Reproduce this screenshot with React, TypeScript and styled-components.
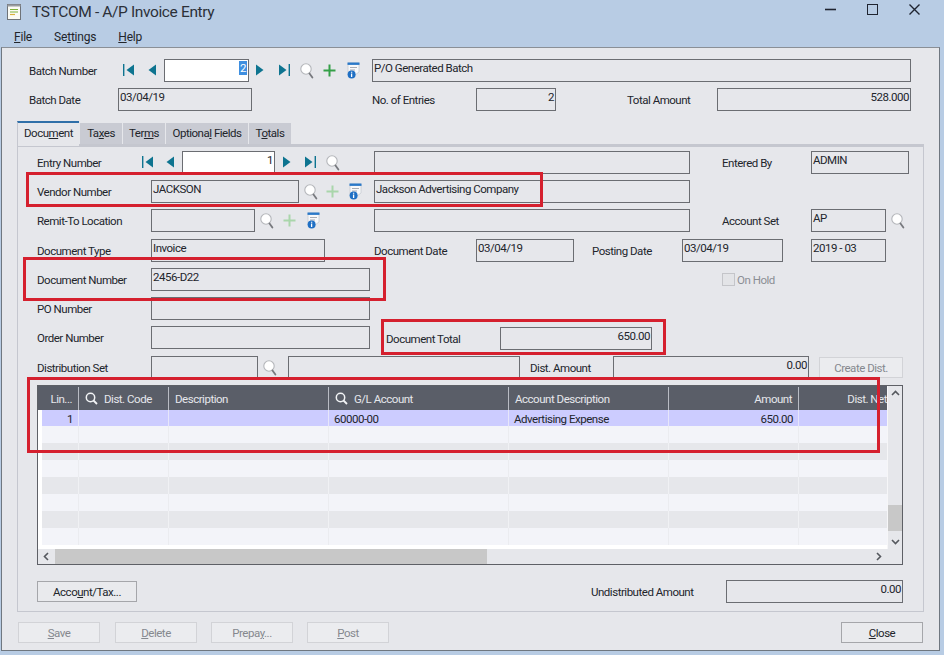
import React from "react";
import styled, { createGlobalStyle } from "styled-components";

const GlobalStyle = createGlobalStyle`
    html, body {
        margin: 0;
        padding: 0;
        background: #b8cce4;
    }
    body {
        font-family: Roboto, "Liberation Sans", sans-serif;
        font-size: 11.5px;
        letter-spacing: -0.48px;
        color: #22252b;
    }
`;

const Window = styled.div`
    position: relative;
    width: 944px;
    height: 655px;
    overflow: hidden;
    background: #b8cce4;
`;

const TitleBar = styled.div`
    display: flex;
    align-items: center;
    height: 24px;
    padding: 0 24px 0 7px;
`;

const Title = styled.div`
    margin-left: 11px;
    flex: 1;
    font-size: 15.5px;
    letter-spacing: -0.37px;
    color: #2c3038;
`;

const WinButtons = styled.div`
    display: flex;
    align-items: center;
    gap: 31px;
    margin-top: -6px;
`;

const MenuBar = styled.div`
    display: flex;
    height: 23px;
    padding: 3px 0 0 14px;
    gap: 22px;
    box-sizing: border-box;
    font-size: 12px;
    letter-spacing: -0.2px;
    line-height: 20px;
    color: #22252b;
`;

const Client = styled.div`
    box-sizing: border-box;
    width: 939px;
    height: 604px;
    margin-left: 1px;
    padding: 11px 16px 0 15px;
    background: #e6e7eb;
    border: 1px solid #6f7780;
    border-top: 1px solid #8a8f96;
`;

const Row = styled.div<{ $mt?: number; $pl?: number }>`
    display: flex;
    align-items: flex-start;
    height: 23px;
    margin-top: ${(p) => p.$mt ?? 6}px;
    padding-left: ${(p) => p.$pl ?? 0}px;
`;

const Label = styled.div<{ $w?: number; $ml?: number; $dy?: number; $muted?: boolean }>`
    flex: none;
    width: ${(p) => (p.$w ? `${p.$w}px` : "auto")};
    margin-left: ${(p) => p.$ml ?? 0}px;
    margin-top: ${(p) => p.$dy ?? 4}px;
    line-height: 17px;
    white-space: nowrap;
    color: ${(p) => (p.$muted ? "#8b8e94" : "#22252b")};
`;

const Field = styled.div<{ $w: number; $ml?: number; $dy?: number; $right?: boolean; $white?: boolean }>`
    flex: none;
    box-sizing: border-box;
    width: ${(p) => p.$w}px;
    height: 23px;
    margin-left: ${(p) => p.$ml ?? 0}px;
    margin-top: ${(p) => p.$dy ?? 0}px;
    padding: 0 1px 0 1px;
    line-height: 17px;
    border: 1px solid #6b6d72;
    background: ${(p) => (p.$white ? "#ffffff" : "#e6e7eb")};
    text-align: ${(p) => (p.$right ? "right" : "left")};
    white-space: nowrap;
    overflow: hidden;
`;

const Selected = styled.span`
    background: #3f8fe0;
    color: #ffffff;
    padding: 0 1px;
`;

const IconSlot = styled.span<{ $w: number; $ml: number; $dy?: number }>`
    flex: none;
    display: block;
    width: ${(p) => p.$w}px;
    margin-left: ${(p) => p.$ml}px;
    margin-top: ${(p) => p.$dy ?? 4}px;
    line-height: 0;
`;

const Tabs = styled.div`
    display: flex;
    align-items: flex-end;
    height: 25px;
    margin-top: 10px;
    gap: 1px;
`;

const Tab = styled.div<{ $w: number; $active?: boolean }>`
    box-sizing: border-box;
    width: ${(p) => p.$w}px;
    height: ${(p) => (p.$active ? 25 : 21)}px;
    margin-bottom: ${(p) => (p.$active ? 0 : 2)}px;
    text-align: center;
    line-height: ${(p) => (p.$active ? 20 : 21)}px;
    background: ${(p) => (p.$active ? "#e6e7eb" : "#c9cbd3")};
    border-top: ${(p) => (p.$active ? "2px solid #2f6fa8" : "none")};
    border-left: ${(p) => (p.$active ? "1px solid #c5c7cf" : "none")};
    position: relative;
    z-index: 1;
`;

const Panel = styled.div`
    box-sizing: border-box;
    width: 907px;
    height: 468px;
    margin-top: -2px;
    padding: 4px 19px 0 19px;
    border: 1px solid #c5c7cf;
    border-top: 3px solid #c5c7cf;
`;

const Grid = styled.div`
    position: relative;
    box-sizing: border-box;
    width: 866px;
    height: 180px;
    margin-top: 6px;
    border: 1px solid #5e6066;
    background: #e6e7eb;
    display: grid;
    grid-template-columns: 849px 15px;
    grid-template-rows: 163px 15px;
`;

const GridBody = styled.div`
    background: #ffffff;
    overflow: hidden;
    padding-bottom: 2px;
`;

const COLS = "41px 90px 160px 180px 160px 130px 88px";

const GridHeader = styled.div`
    display: grid;
    grid-template-columns: ${COLS};
    height: 24px;
    background: #5a5e68;
    color: #e6e7ec;
`;

const HeadCell = styled.div<{ $right?: boolean }>`
    display: flex;
    align-items: center;
    justify-content: ${(p) => (p.$right ? "flex-end" : "flex-start")};
    gap: 6px;
    padding: 0 6px;
    margin-top: 1px;
    border-right: 1px solid #b9bcc4;
    white-space: nowrap;
    overflow: hidden;
    &:last-child {
        border-right: none;
        padding: 0;
    }
`;

const GridRow = styled.div<{ $bg: string; $h: number }>`
    display: grid;
    grid-template-columns: ${COLS};
    height: ${(p) => p.$h}px;
    background: ${(p) => p.$bg};
    box-shadow: inset 4px 0 0 #ffffff;
    line-height: ${(p) => p.$h + 2}px;
`;

const GridCell = styled.div<{ $right?: boolean; $line: string }>`
    box-sizing: border-box;
    padding: 0 5px;
    text-align: ${(p) => (p.$right ? "right" : "left")};
    border-right: 1px solid ${(p) => p.$line};
    white-space: nowrap;
    overflow: hidden;
    &:last-child {
        border-right: none;
    }
`;

const VScroll = styled.div`
    display: flex;
    flex-direction: column;
    background: #e6e7eb;
    border-left: 1px solid #f6f6f8;
`;

const ScrollArrow = styled.div<{ $end?: boolean }>`
    display: flex;
    align-items: center;
    justify-content: center;
    height: 15px;
    flex: none;
    margin-top: ${(p) => (p.$end ? "auto" : "0")};
`;

const VThumb = styled.div`
    height: 26px;
    margin-top: 104px;
    background: #c8c8c8;
`;

const HScroll = styled.div`
    display: flex;
    align-items: stretch;
    background: #e6e7eb;
`;

const HArrow = styled.div`
    display: flex;
    align-items: center;
    justify-content: center;
    width: 17px;
    flex: none;
    &:last-child {
        margin-left: auto;
    }
`;

const HThumb = styled.div`
    width: 432px;
    background: #c8c8c8;
`;

const Corner = styled.div`
    background: #e6e7eb;
`;

const FooterRow = styled.div`
    display: flex;
    align-items: flex-start;
    height: 23px;
    margin-top: 15px;
`;

const Button = styled.div<{ $w?: number; $ml?: number; $off?: boolean; $dy?: number }>`
    flex: none;
    box-sizing: border-box;
    width: ${(p) => p.$w ?? 82}px;
    height: 21px;
    margin-left: ${(p) => p.$ml ?? 0}px;
    margin-top: ${(p) => p.$dy ?? 0}px;
    text-align: center;
    line-height: 21px;
    border: 1px solid ${(p) => (p.$off ? "#d2d3d7" : "#a5a6aa")};
    background: ${(p) => (p.$off ? "#ebecef" : "#e9eaed")};
    color: ${(p) => (p.$off ? "#85888e" : "#22252b")};
`;

const ActionBar = styled.div`
    display: flex;
    height: 21px;
    margin-top: 10px;
`;

const CheckBox = styled.span<{ $ml: number }>`
    flex: none;
    box-sizing: border-box;
    width: 13px;
    height: 13px;
    margin: 5px 2px 0 ${(p) => p.$ml}px;
    border: 1px solid #c4c5c9;
    background: #e3e4e7;
`;

const Accent = styled.u``;

const RedBox = styled.div<{ $x: number; $y: number; $w: number; $h: number }>`
    position: absolute;
    box-sizing: border-box;
    left: ${(p) => p.$x}px;
    top: ${(p) => p.$y}px;
    width: ${(p) => p.$w}px;
    height: ${(p) => p.$h}px;
    border: 3px solid #d5202e;
    pointer-events: none;
    z-index: 5;
`;

const NAV_COLOR = "#0e7490";

const NavFirst = () => (
    <svg width="12" height="12" viewBox="0 0 12 12">
        <rect x="0" y="0" width="1.4" height="12" fill={NAV_COLOR} />
        <path d="M11 0.5V11.5L3.5 6Z" fill={NAV_COLOR} />
    </svg>
);
const NavPrev = () => (
    <svg width="8" height="12" viewBox="0 0 8 12">
        <path d="M8 0.5V11.5L0.5 6Z" fill={NAV_COLOR} />
    </svg>
);
const NavNext = () => (
    <svg width="8" height="12" viewBox="0 0 8 12">
        <path d="M0 0.5V11.5L7.5 6Z" fill={NAV_COLOR} />
    </svg>
);
const NavLast = () => (
    <svg width="12" height="12" viewBox="0 0 12 12">
        <rect x="10.6" y="0" width="1.4" height="12" fill={NAV_COLOR} />
        <path d="M1 0.5V11.5L8.5 6Z" fill={NAV_COLOR} />
    </svg>
);
const SearchIcon = () => (
    <svg width="14" height="16" viewBox="0 0 14 16">
        <circle cx="6" cy="6" r="5.2" fill="#ffffff" stroke="#b4b6ba" strokeWidth="1.1" />
        <path d="M9.5 10.4L12.4 14.6" stroke="#77797e" strokeWidth="1.8" strokeLinecap="round" />
    </svg>
);
const PlusIcon = ({ off }: { off?: boolean }) => (
    <svg width="13" height="13" viewBox="0 0 13 13">
        <path d="M6.5 0.5V12.5M0.5 6.5H12.5" stroke={off ? "#a9d6ab" : "#34a048"} strokeWidth="2" />
    </svg>
);
const InfoIcon = () => (
    <svg width="13" height="17" viewBox="0 0 13 17">
        <path d="M1 1H12V10L8 13H1Z" fill="#f7f8fa" stroke="#c7cbd2" strokeWidth="0.8" />
        <rect x="0.5" y="0.5" width="12" height="2.4" fill="#2a78c8" />
        <path d="M3 5.5H10M3 8H8" stroke="#a8acb4" strokeWidth="1" />
        <circle cx="4.6" cy="12.6" r="4" fill="#1f6fc4" />
        <path d="M4.6 11.6V15M4.6 9.8V10.8" stroke="#ffffff" strokeWidth="1.3" />
    </svg>
);
const DocIcon = () => (
    <svg width="14" height="16" viewBox="0 0 14 16">
        <rect x="0.5" y="0.5" width="13" height="15" fill="#fbfbf4" stroke="#6f7378" />
        <rect x="0.5" y="0.5" width="13" height="2" fill="#9a9da2" />
        <path d="M3 5.5H11M3 8H11" stroke="#7fb23c" strokeWidth="1.2" />
        <path d="M3 10.5H8" stroke="#d9b23c" strokeWidth="1.2" />
    </svg>
);
const Chevron = ({ dir }: { dir: "up" | "down" | "left" | "right" }) => {
    const d = {
        up: "M1 6L4.5 2.5L8 6",
        down: "M1 3L4.5 6.5L8 3",
        left: "M6 1L2.5 4.5L6 8",
        right: "M3 1L6.5 4.5L3 8",
    }[dir];
    return (
        <svg width="9" height="9" viewBox="0 0 9 9">
            <path d={d} fill="none" stroke="#55585e" strokeWidth="1.6" />
        </svg>
    );
};
const HeadSearch = () => (
    <svg width="13" height="13" viewBox="0 0 13 13">
        <circle cx="5.5" cy="5.5" r="4.2" fill="none" stroke="#f2f3f5" strokeWidth="1.5" />
        <path d="M8.5 8.5L12 12" stroke="#f2f3f5" strokeWidth="1.8" />
    </svg>
);

const STRIPES = [0, 1, 2, 3, 4, 5, 6];

function App() {
    return (
        <Window>
            <GlobalStyle />
            <TitleBar>
                <DocIcon />
                <Title>TSTCOM - A/P Invoice Entry</Title>
                <WinButtons>
                    <svg width="11" height="11" viewBox="0 0 11 11">
                        <path d="M0 5.5H11" stroke="#1f2430" strokeWidth="1.6" />
                    </svg>
                    <svg width="11" height="11" viewBox="0 0 11 11">
                        <rect x="0.5" y="0.5" width="10" height="10" fill="none" stroke="#1f2430" />
                    </svg>
                    <svg width="11" height="11" viewBox="0 0 11 11">
                        <path d="M0.5 0.5L10.5 10.5M10.5 0.5L0.5 10.5" stroke="#1f2430" strokeWidth="1.4" />
                    </svg>
                </WinButtons>
            </TitleBar>
            <MenuBar>
                <span><Accent>F</Accent>ile</span>
                <span>Se<Accent>t</Accent>tings</span>
                <span><Accent>H</Accent>elp</span>
            </MenuBar>
            <Client>
                <Row $mt={0} $pl={12}>
                    <Label $w={94}>Batch Number</Label>
                    <IconSlot $w={12} $ml={0} $dy={5}><NavFirst /></IconSlot>
                    <IconSlot $w={8} $ml={13} $dy={5}><NavPrev /></IconSlot>
                    <Field $w={85} $ml={8} $white $right><Selected>2</Selected></Field>
                    <IconSlot $w={8} $ml={7} $dy={5}><NavNext /></IconSlot>
                    <IconSlot $w={12} $ml={14} $dy={5}><NavLast /></IconSlot>
                    <IconSlot $w={14} $ml={10}><SearchIcon /></IconSlot>
                    <IconSlot $w={13} $ml={9} $dy={5}><PlusIcon /></IconSlot>
                    <IconSlot $w={13} $ml={11} $dy={3}><InfoIcon /></IconSlot>
                    <Field $w={539} $ml={12}>P/O Generated Batch</Field>
                </Row>
                <Row $pl={12}>
                    <Label $w={89}>Batch Date</Label>
                    <Field $w={134}>03/04/19</Field>
                    <Label $w={104} $ml={120}>No. of Entries</Label>
                    <Field $w={80} $right>2</Field>
                    <Label $w={90} $ml={71}>Total Amount</Label>
                    <Field $w={194} $right>528.000</Field>
                </Row>
                <Tabs>
                    <Tab $w={62} $active>Docu<Accent>m</Accent>ent</Tab>
                    <Tab $w={42}>Ta<Accent>x</Accent>es</Tab>
                    <Tab $w={42}>Ter<Accent>m</Accent>s</Tab>
                    <Tab $w={82}>Optiona<Accent>l</Accent> Fields</Tab>
                    <Tab $w={42}>T<Accent>o</Accent>tals</Tab>
                </Tabs>
                <Panel>
                    <Row $mt={0}>
                        <Label $w={105}>Entry Number</Label>
                        <IconSlot $w={12} $ml={0} $dy={5}><NavFirst /></IconSlot>
                        <IconSlot $w={8} $ml={12} $dy={5}><NavPrev /></IconSlot>
                        <Field $w={93} $ml={8} $white $right>1</Field>
                        <IconSlot $w={8} $ml={8} $dy={5}><NavNext /></IconSlot>
                        <IconSlot $w={12} $ml={13} $dy={5}><NavLast /></IconSlot>
                        <IconSlot $w={14} $ml={10}><SearchIcon /></IconSlot>
                        <Field $w={316} $ml={34} />
                        <Label $w={89} $ml={32}>Entered By</Label>
                        <Field $w={98}>ADMIN</Field>
                    </Row>
                    <Row>
                        <Label $w={114}>Vendor Number</Label>
                        <Field $w={148}>JACKSON</Field>
                        <IconSlot $w={14} $ml={5}><SearchIcon /></IconSlot>
                        <IconSlot $w={13} $ml={8} $dy={5}><PlusIcon off /></IconSlot>
                        <IconSlot $w={13} $ml={10} $dy={3}><InfoIcon /></IconSlot>
                        <Field $w={316} $ml={12}>Jackson Advertising Company</Field>
                    </Row>
                    <Row>
                        <Label $w={114}>Remit-To Location</Label>
                        <Field $w={104} />
                        <IconSlot $w={14} $ml={5}><SearchIcon /></IconSlot>
                        <IconSlot $w={13} $ml={9} $dy={5}><PlusIcon off /></IconSlot>
                        <IconSlot $w={13} $ml={11} $dy={3}><InfoIcon /></IconSlot>
                        <Field $w={316} $ml={54} />
                        <Label $w={89} $ml={32}>Account Set</Label>
                        <Field $w={75}>AP</Field>
                        <IconSlot $w={14} $ml={5}><SearchIcon /></IconSlot>
                    </Row>
                    <Row $mt={7}>
                        <Label $w={114}>Document Type</Label>
                        <Field $w={174}>Invoice</Field>
                        <Label $w={102} $ml={49}>Document Date</Label>
                        <Field $w={98}>03/04/19</Field>
                        <Label $w={90} $ml={18}>Posting Date</Label>
                        <Field $w={101}>03/04/19</Field>
                        <Field $w={75} $ml={28}>2019 - 03</Field>
                    </Row>
                    <Row>
                        <Label $w={114}>Document Number</Label>
                        <Field $w={219}>2456-D22</Field>
                        <CheckBox $ml={352} />
                        <Label $muted>On Hold</Label>
                    </Row>
                    <Row>
                        <Label $w={114}>PO Number</Label>
                        <Field $w={219} />
                    </Row>
                    <Row>
                        <Label $w={114}>Order Number</Label>
                        <Field $w={219} />
                        <Label $w={114} $ml={16} $dy={5}>Document Total</Label>
                        <Field $w={152} $dy={1} $right>650.00</Field>
                    </Row>
                    <Row $mt={7}>
                        <Label $w={114}>Distribution Set</Label>
                        <Field $w={107} />
                        <IconSlot $w={14} $ml={5}><SearchIcon /></IconSlot>
                        <Field $w={232} $ml={11} />
                        <Label $w={83} $ml={10}>Dist. Amount</Label>
                        <Field $w={196} $right>0.00</Field>
                        <Button $w={84} $ml={10} $dy={1} $off>Create Dist.</Button>
                    </Row>
                    <Grid>
                        <GridBody>
                            <GridHeader>
                                <HeadCell $right>Lin...</HeadCell>
                                <HeadCell><HeadSearch />Dist. Code</HeadCell>
                                <HeadCell>Description</HeadCell>
                                <HeadCell><HeadSearch />G/L Account</HeadCell>
                                <HeadCell>Account Description</HeadCell>
                                <HeadCell $right>Amount</HeadCell>
                                <HeadCell $right>Dist. Net</HeadCell>
                            </GridHeader>
                            <GridRow $bg="#ccccff" $h={16}>
                                <GridCell $right $line="#e6e6fa">1</GridCell>
                                <GridCell $line="#e6e6fa" />
                                <GridCell $line="#e6e6fa" />
                                <GridCell $line="#e6e6fa">60000-00</GridCell>
                                <GridCell $line="#e6e6fa">Advertising Expense</GridCell>
                                <GridCell $right $line="#e6e6fa">650.00</GridCell>
                                <GridCell $line="#e6e6fa" />
                            </GridRow>
                            {STRIPES.map((i) => (
                                <GridRow key={i} $bg={i % 2 === 0 ? "#f3f4f9" : "#e6e7eb"} $h={17}>
                                    {[0, 1, 2, 3, 4, 5, 6].map((c) => (
                                        <GridCell key={c} $line={i % 2 === 0 ? "#ebecf0" : "#f0f1f4"} />
                                    ))}
                                </GridRow>
                            ))}
                        </GridBody>
                        <VScroll>
                            <ScrollArrow><Chevron dir="up" /></ScrollArrow>
                            <VThumb />
                            <ScrollArrow $end><Chevron dir="down" /></ScrollArrow>
                        </VScroll>
                        <HScroll>
                            <HArrow><Chevron dir="left" /></HArrow>
                            <HThumb />
                            <HArrow><Chevron dir="right" /></HArrow>
                        </HScroll>
                        <Corner />
                    </Grid>
                    <FooterRow>
                        <Button $w={100} $dy={1}>Acco<Accent>u</Accent>nt/Tax...</Button>
                        <Label $w={135} $ml={454}>Undistributed Amount</Label>
                        <Field $w={177} $right>0.00</Field>
                    </FooterRow>
                </Panel>
                <ActionBar>
                    <Button $off $ml={1}><Accent>S</Accent>ave</Button>
                    <Button $off $ml={15}><Accent>D</Accent>elete</Button>
                    <Button $off $ml={14}>Prepa<Accent>y</Accent>...</Button>
                    <Button $off $ml={14}><Accent>P</Accent>ost</Button>
                    <Button $ml={452}><Accent>C</Accent>lose</Button>
                </ActionBar>
            </Client>
            <RedBox $x={26} $y={172} $w={517} $h={35} />
            <RedBox $x={23} $y={257} $w={363} $h={44} />
            <RedBox $x={381} $y={319} $w={285} $h={36} />
            <RedBox $x={27} $y={377} $w={853} $h={76} />
        </Window>
    );
}

export default App;
